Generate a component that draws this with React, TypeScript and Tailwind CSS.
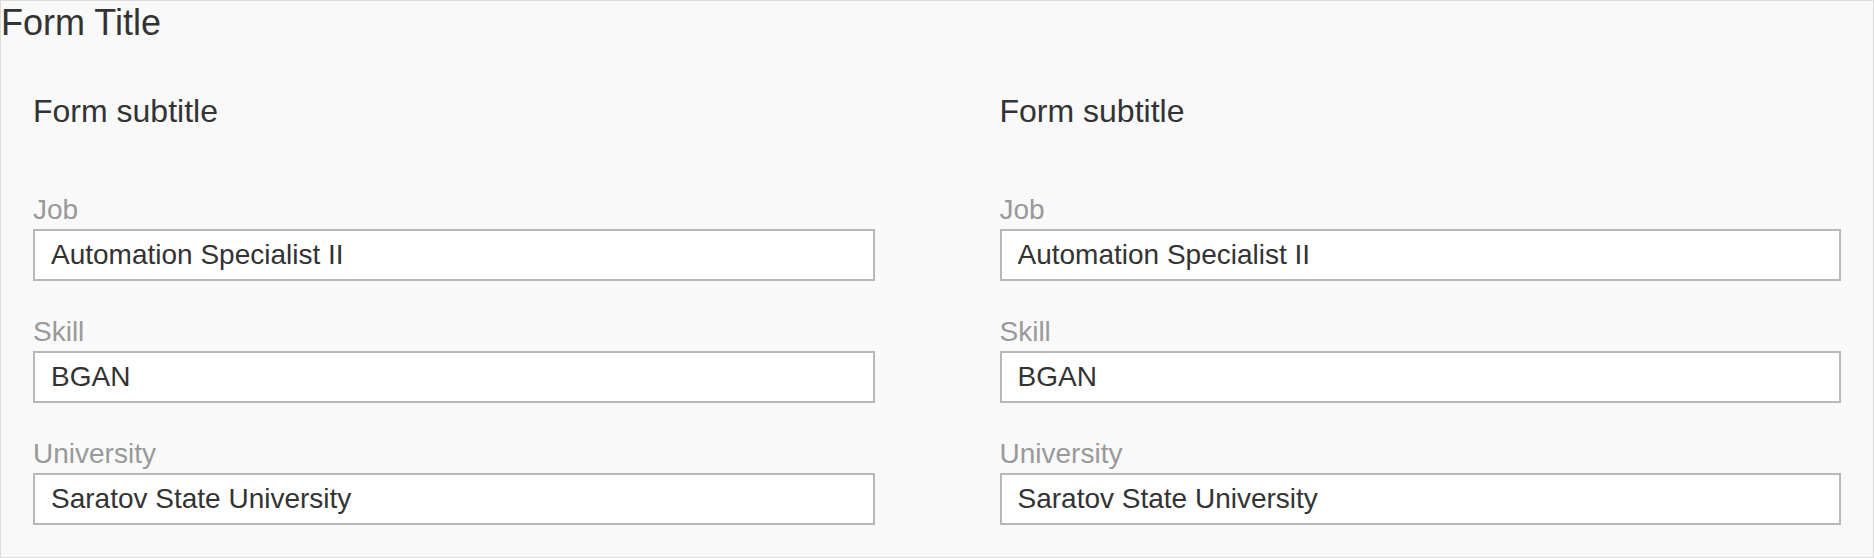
const FIELDS = [
  { label: "Job", value: "Automation Specialist II" },
  { label: "Skill", value: "BGAN" },
  { label: "University", value: "Saratov State University" },
];

function FormColumn() {
  return (
    <div className="flex flex-col">
      <h2 className="mt-[91px] text-[32px] leading-[32px] font-normal text-[#333333]">Form subtitle</h2>
      <div className="mt-[69px] flex flex-col gap-[37px]">
        {FIELDS.map((f) => (
          <label key={f.label} className="flex flex-col gap-[5px]">
            <span className="text-[28px] leading-[28px] text-[#999999]">{f.label}</span>
            <input
              type="text"
              readOnly
              defaultValue={f.value}
              className="h-[52px] w-full border-2 border-[#b8b8b8] bg-white pl-4 text-[28px] text-[#333333] outline-none"
            />
          </label>
        ))}
      </div>
    </div>
  );
}

export default function App() {
  return (
    <div
      className="h-[558px] w-[1874px] border border-[#dddddd] bg-[#f9f9f9] text-[#333333]"
      style={{ fontFamily: '"Liberation Sans", Arial, sans-serif' }}
    >
      <h1 className="mt-[4px] text-[36px] leading-[36px] font-normal">Form Title</h1>
      <div className="-mt-[37px] grid grid-cols-2 gap-x-[125px] px-8">
        <FormColumn />
        <FormColumn />
      </div>
    </div>
  );
}
